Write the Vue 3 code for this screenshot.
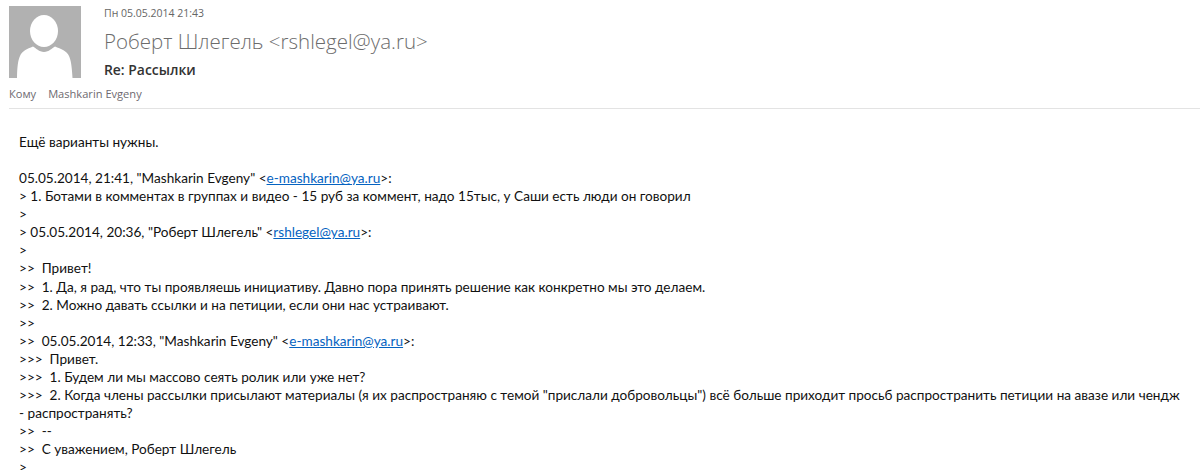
<script setup>
const lines = [
  { text: 'Ещё варианты нужны.' },
  { text: '' },
  { text: '05.05.2014, 21:41, "Mashkarin Evgeny" <', mail: 'e-mashkarin@ya.ru', after: '>:' },
  { text: '> 1. Ботами в комментах в группах и видео - 15 руб за коммент, надо 15тыс, у Саши есть люди он говорил' },
  { text: '>' },
  { text: '> 05.05.2014, 20:36, "Роберт Шлегель" <', mail: 'rshlegel@ya.ru', after: '>:' },
  { text: '>' },
  { text: '>>  Привет!' },
  { text: '>>  1. Да, я рад, что ты проявляешь инициативу. Давно пора принять решение как конкретно мы это делаем.' },
  { text: '>>  2. Можно давать ссылки и на петиции, если они нас устраивают.' },
  { text: '>>' },
  { text: '>>  05.05.2014, 12:33, "Mashkarin Evgeny" <', mail: 'e-mashkarin@ya.ru', after: '>:' },
  { text: '>>>  Привет.' },
  { text: '>>>  1. Будем ли мы массово сеять ролик или уже нет?' },
  { text: '>>>  2. Когда члены рассылки присылают материалы (я их распространяю с темой "прислали добровольцы") всё больше приходит просьб распространить петиции на авазе или чендж' },
  { text: '- распространять?' },
  { text: '>>  --' },
  { text: '>>  С уважением, Роберт Шлегель' },
  { text: '>' }
]
</script>

<template>
  <div class="mail">
    <header class="head">
      <svg class="avatar" viewBox="0 0 72 72" aria-hidden="true">
        <rect width="72" height="72" fill="#b1b1b1" />
        <ellipse cx="35" cy="25" rx="14" ry="16" fill="#fff" />
        <path d="M8 72C8 62 9 54 11 50C13 45 18 43 24 40.500C27 42 30 46 35 46C40 46 43 42 46 40.500C52 43 58 45 60 50C62 54 63 62 63.500 72Z" fill="#fff" />
      </svg>
      <div class="info">
        <div class="date">Пн 05.05.2014 21:43</div>
        <div class="sender">Роберт Шлегель &lt;rshlegel@ya.ru&gt;</div>
        <div class="subject">Re: Рассылки</div>
      </div>
    </header>
    <div class="to"><span class="to-label">Кому</span><span>Mashkarin Evgeny</span></div>
    <div class="body">
      <div v-for="(line, i) in lines" :key="i" class="line">{{ line.text }}<a v-if="line.mail" href="#">{{ line.mail }}</a>{{ line.after }}</div>
    </div>
  </div>
</template>

<style>
html, body {
  background: #fff;
  overflow: hidden;
}
</style>

<style scoped>
.mail {
  width: 1200px;
  height: 470px;
  overflow: hidden;
  padding: 6px 0 0 9px;
  box-sizing: border-box;
  font-family: "Open Sans", "Noto Sans", sans-serif;
}

.head {
  display: flex;
  gap: 23px;
}

.avatar {
  width: 72px;
  height: 72px;
  flex: none;
}

.info {
  display: flex;
  flex-direction: column;
}

.date {
  font-size: 10.500px;
  line-height: 14px;
  color: #666;
}

.sender {
  margin-top: 7px;
  font-size: 20.500px;
  line-height: 28px;
  color: #6c6c6c;
  font-weight: 300;
}

.subject {
  margin-top: 5px;
  font-size: 13.900px;
  line-height: 20px;
  font-weight: 600;
  color: #333;
}

.to {
  display: flex;
  gap: 12px;
  margin-top: 6px;
  padding-bottom: 7px;
  border-bottom: 1px solid #e3e3e3;
  font-size: 11.100px;
  line-height: 15px;
  color: #6e6a70;
}

.body {
  padding: 24px 0 0 10px;
  font-family: Lato, "Open Sans", sans-serif;
  font-size: 13.600px;
  line-height: 18.070px;
  color: #111;
}

.line {
  white-space: pre;
  min-height: 18.070px;
}

a {
  color: #0563c1;
  text-decoration: underline;
}
</style>
